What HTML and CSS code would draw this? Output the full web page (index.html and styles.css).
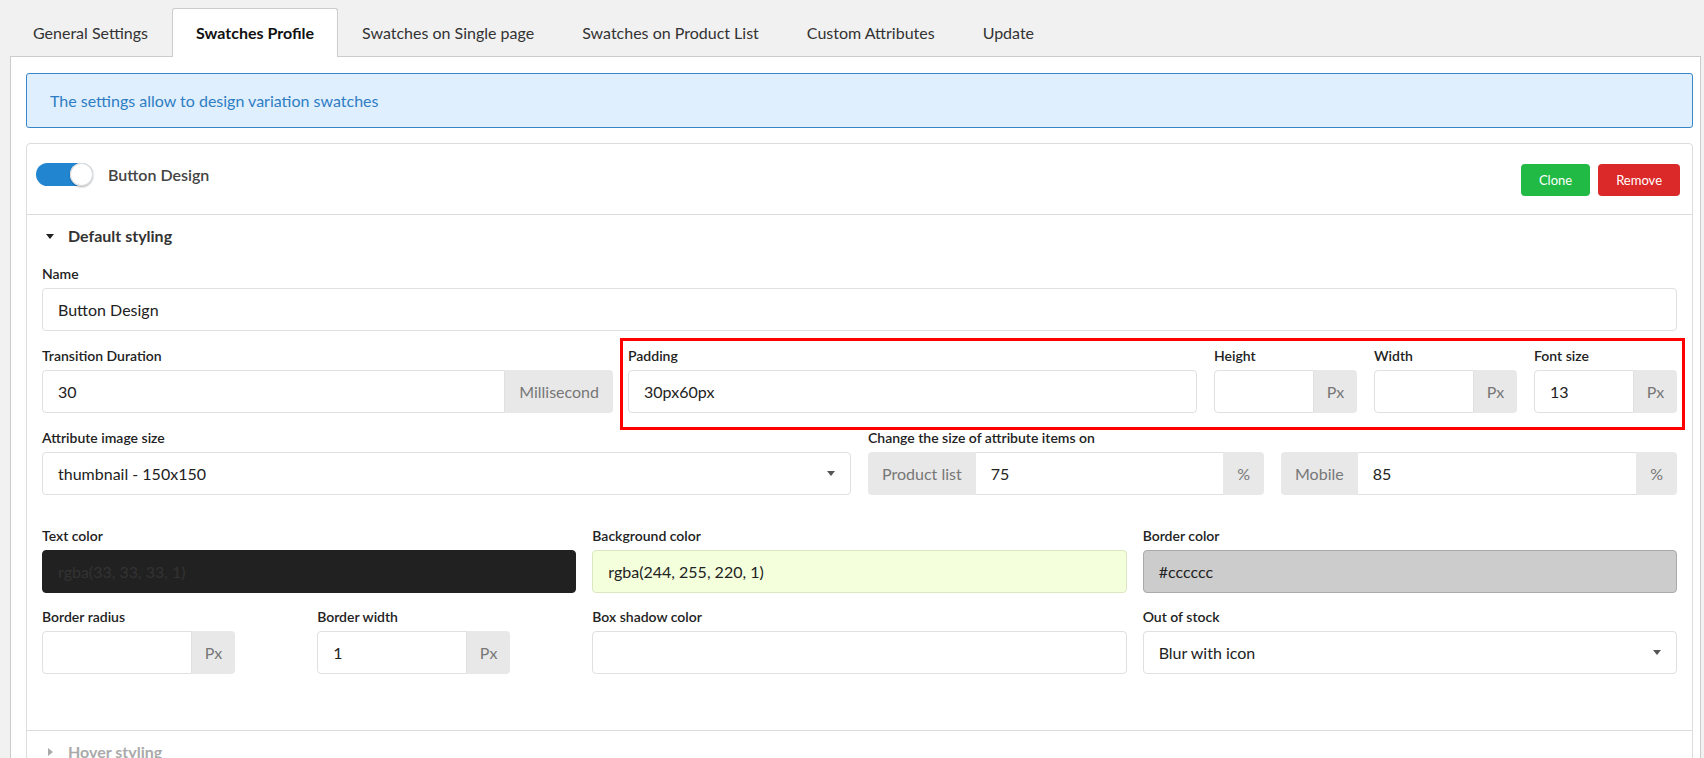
FILE: index.html
```html
<!DOCTYPE html>
<html lang="en">
<head>
  <meta charset="UTF-8">
  <title>Swatches Profile</title>
  <link rel="stylesheet" href="styles.css">
</head>
<body>

  <div class="tabs">
    <div class="tab">General Settings</div>
    <div class="tab active">Swatches Profile</div>
    <div class="tab">Swatches on Single page</div>
    <div class="tab">Swatches on Product List</div>
    <div class="tab">Custom Attributes</div>
    <div class="tab">Update</div>
  </div>

  <div class="panel">
    <div class="notice">The settings allow to design variation swatches</div>

    <div class="card">
      <div class="card-head">
        <span class="toggle"></span>
        <span class="card-title">Button Design</span>
        <div class="actions">
          <button class="btn green">Clone</button>
          <button class="btn red">Remove</button>
        </div>
      </div>

      <!-- default styling -->
      <div class="section">
        <div class="section-title"><span class="caret down"></span>Default styling</div>

        <div class="row">
          <div class="field">
            <label>Name</label>
            <div class="input">Button Design</div>
          </div>
        </div>

        <div class="row row-2">
          <div class="field">
            <label>Transition Duration</label>
            <div class="group">
              <div class="input">30</div>
              <div class="addon">Millisecond</div>
            </div>
          </div>
          <div class="sizes">
            <div class="field">
              <label>Padding</label>
              <div class="input">30px60px</div>
            </div>
            <div class="field">
              <label>Height</label>
              <div class="group">
                <div class="input"></div>
                <div class="addon px">Px</div>
              </div>
            </div>
            <div class="field">
              <label>Width</label>
              <div class="group">
                <div class="input"></div>
                <div class="addon px">Px</div>
              </div>
            </div>
            <div class="field">
              <label>Font size</label>
              <div class="group">
                <div class="input">13</div>
                <div class="addon px">Px</div>
              </div>
            </div>
            <div class="mark"></div>
          </div>
        </div>

        <div class="row row-3">
          <div class="field">
            <label>Attribute image size</label>
            <div class="input select">thumbnail - 150x150</div>
          </div>
          <div class="field">
            <label>Change the size of attribute items on</label>
            <div class="halves">
              <div class="group">
                <div class="addon first">Product list</div>
                <div class="input">75</div>
                <div class="addon">%</div>
              </div>
              <div class="group">
                <div class="addon first">Mobile</div>
                <div class="input">85</div>
                <div class="addon">%</div>
              </div>
            </div>
          </div>
        </div>

        <div class="row thirds">
          <div class="field">
            <label>Text color</label>
            <div class="input dark">rgba(33, 33, 33, 1)</div>
          </div>
          <div class="field">
            <label>Background color</label>
            <div class="input lime">rgba(244, 255, 220, 1)</div>
          </div>
          <div class="field">
            <label>Border color</label>
            <div class="input grey">#cccccc</div>
          </div>
        </div>

        <div class="row thirds">
          <div class="halves wide">
            <div class="field">
              <label>Border radius</label>
              <div class="group short">
                <div class="input"></div>
                <div class="addon px">Px</div>
              </div>
            </div>
            <div class="field">
              <label>Border width</label>
              <div class="group short">
                <div class="input">1</div>
                <div class="addon px">Px</div>
              </div>
            </div>
          </div>
          <div class="field">
            <label>Box shadow color</label>
            <div class="input"></div>
          </div>
          <div class="field">
            <label>Out of stock</label>
            <div class="input select">Blur with icon</div>
          </div>
        </div>
      </div>

      <div class="section muted">
        <div class="section-title"><span class="caret right"></span>Hover styling</div>
      </div>
    </div>
  </div>

</body>
</html>
```

FILE: styles.css
```css
body {
  margin: 0;
  background-color: #f1f1f1;
  font-family: Lato, "Open Sans", sans-serif;
  font-size: 16px;
  color: #333;
  overflow: hidden;
}

/* tabs */
.tabs {
  display: flex;
  padding: 8px 0 0 9px;
  height: 48px;
}
.tab {
  padding: 0 23px;
  line-height: 48px;
  border: 1px solid transparent;
  border-bottom: none;
  border-radius: 3px 3px 0 0;
  color: #333;
}
.tab.active {
  background-color: #fff;
  border-color: #ccc;
  font-weight: 700;
  color: #111;
  position: relative;
  z-index: 1;
  height: 48px;
  margin-bottom: -1px;
}

.panel {
  background-color: #fff;
  border: 1px solid #ccc;
  margin: 0 3px 0 10px;
  padding: 16px 7px 0 15px;
  height: 760px;
}
.notice {
  height: 55px;
  box-sizing: border-box;
  display: flex;
  align-items: center;
  padding: 0 23px;
  background-color: #dfeffd;
  border: 1px solid #3a85c6;
  border-radius: 3px;
  color: #2e7dc4;
  margin-bottom: 15px;
}

/* profile card */
.card {
  border: 1px solid #ddd;
  border-radius: 4px;
}
.card-head {
  display: flex;
  align-items: flex-start;
  height: 71px;
  box-sizing: border-box;
  padding: 19px 12px 0 9px;
  border-bottom: 1px solid #ddd;
}
.toggle {
  width: 57px;
  height: 23px;
  border-radius: 12px;
  background-color: #2185d0;
  position: relative;
}
.toggle::after {
  content: "";
  position: absolute;
  right: 0;
  top: 0;
  width: 23px;
  height: 23px;
  border-radius: 50%;
  background: #fff;
  box-shadow: 0 1px 2px rgba(0, 0, 0, 0.3), inset 0 0 0 1px #ddd;
}
.card-title {
  margin-left: 15px;
  line-height: 23px;
  font-weight: 600;
  color: #444;
}
.actions {
  margin-left: auto;
  display: flex;
  gap: 8px;
  padding-top: 1px;
}
.btn {
  height: 32px;
  padding: 0 18px;
  border: none;
  border-radius: 4px;
  font-family: inherit;
  font-size: 13px;
  color: #fff;
}
.green { background-color: #21ba45; }
.red { background-color: #db2828; }

/* sections */
.section {
  padding: 10px 15px 56px;
  border-bottom: 1px solid #ddd;
}
.section.muted {
  border-bottom: none;
  color: #aaa;
}
.section-title {
  display: flex;
  align-items: center;
  line-height: 22px;
  font-weight: 700;
  padding-left: 4px;
  margin-bottom: 18px;
}
.muted .section-title { color: #aaa; }
.caret {
  width: 0;
  height: 0;
  margin-right: 14px;
}
.caret.down {
  border-left: 4px solid transparent;
  border-right: 4px solid transparent;
  border-top: 5px solid #222;
}
.caret.right {
  border-top: 4px solid transparent;
  border-bottom: 4px solid transparent;
  border-left: 5px solid #aaa;
  margin-left: 2px;
  margin-right: 15px;
}

/* form */
.row {
  margin-bottom: 16px;
}
.row:last-child {
  margin-bottom: 0;
}
.field label {
  display: block;
  font-size: 14px;
  font-weight: 600;
  line-height: 18px;
  margin-bottom: 5px;
  color: #222;
}
.input {
  height: 43px;
  box-sizing: border-box;
  display: flex;
  align-items: center;
  padding: 0 15px;
  border: 1px solid #e0e0e0;
  border-radius: 4px;
  color: #222;
  background: #fff;
}
.group {
  display: flex;
}
.group .input {
  flex: 1;
  min-width: 0;
  border-radius: 4px 0 0 4px;
}
.addon {
  display: flex;
  align-items: center;
  height: 43px;
  box-sizing: border-box;
  padding: 0 14px;
  background-color: #e8e8e8;
  color: #777;
  border-radius: 0 4px 4px 0;
}
.addon.px {
  width: 43px;
  padding: 0;
  justify-content: center;
}
.addon.first {
  border-radius: 4px 0 0 4px;
}
.group .addon.first + .input {
  border-radius: 0;
  border-left: none;
  border-right: none;
}

.row-2 {
  display: grid;
  grid-template-columns: 571px 1fr;
  gap: 15px;
}
.sizes {
  display: grid;
  grid-template-columns: 1fr 143px 143px 143px;
  gap: 17px;
  position: relative;
}
.mark {
  position: absolute;
  top: -9px;
  left: -8px;
  right: -8px;
  bottom: -17px;
  border: 3px solid #f00;
}

.row-3 {
  display: grid;
  grid-template-columns: 1fr 1fr;
  gap: 17px;
  margin-bottom: 32px;
}
.halves {
  display: grid;
  grid-template-columns: 1fr 1fr;
  gap: 17px;
}
.halves.wide {
  gap: 16px;
}
.thirds {
  display: grid;
  grid-template-columns: 1fr 1fr 1fr;
  gap: 16px;
  margin-bottom: 15px;
}
.group.short {
  width: 193px;
}

.select {
  position: relative;
}
.select::after {
  content: "";
  position: absolute;
  right: 15px;
  top: 18px;
  border-left: 4px solid transparent;
  border-right: 4px solid transparent;
  border-top: 5px solid #555;
}

.dark {
  background-color: #212121;
  border-color: #212121;
  color: #333;
}
.lime {
  background-color: #f4ffdc;
  border-color: #dbe7c3;
}
.grey {
  background-color: #ccc;
  border-color: #aaa;
}
```
